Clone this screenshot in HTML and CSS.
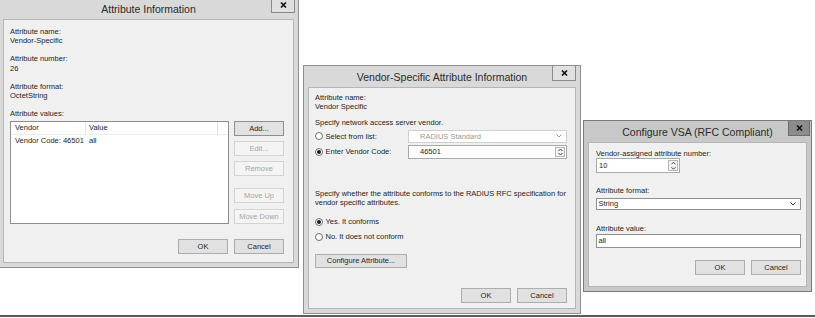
FILE: index.html
```html
<!DOCTYPE html>
<html lang="en">
<head>
    <meta charset="UTF-8">
    <title>Vendor-Specific Attribute</title>
    <link rel="stylesheet" href="styles.css">
</head>
<body>
    <div class="desktop">

        <!-- Attribute Information -->
        <div class="window attr-info">
            <div class="titlebar">
                <span class="title">Attribute Information</span>
                <span class="close-btn"><svg width="7" height="6" viewBox="0 0 7 6"><path d="M1 0.5 L6 5.5 M6 0.5 L1 5.5" stroke="#111" stroke-width="1.6"/></svg></span>
            </div>
            <div class="client">
                <div class="field">
                    <div>Attribute name:</div>
                    <div>Vendor-Specific</div>
                </div>
                <div class="field">
                    <div>Attribute number:</div>
                    <div>26</div>
                </div>
                <div class="field">
                    <div>Attribute format:</div>
                    <div>OctetString</div>
                </div>
                <div class="field-label">Attribute values:</div>
                <div class="values-row">
                    <div class="listview">
                        <div class="lv-head">
                            <span class="col-vendor">Vendor</span>
                            <span class="col-value">Value</span>
                        </div>
                        <div class="lv-row">
                            <span class="col-vendor">Vendor Code: 46501</span>
                            <span class="col-value">all</span>
                        </div>
                    </div>
                    <div class="side-buttons">
                        <button class="btn default">Add...</button>
                        <button class="btn" disabled>Edit...</button>
                        <button class="btn" disabled>Remove</button>
                        <button class="btn move-up" disabled>Move Up</button>
                        <button class="btn move-down" disabled>Move Down</button>
                    </div>
                </div>
                <div class="footer">
                    <button class="btn">OK</button>
                    <button class="btn">Cancel</button>
                </div>
            </div>
        </div>

        <!-- Vendor-Specific Attribute Information -->
        <div class="window vsa-info">
            <div class="titlebar">
                <span class="title">Vendor-Specific Attribute Information</span>
                <span class="close-btn"><svg width="7" height="6" viewBox="0 0 7 6"><path d="M1 0.5 L6 5.5 M6 0.5 L1 5.5" stroke="#111" stroke-width="1.6"/></svg></span>
            </div>
            <div class="client">
                <div class="tight">
                    <div>Attribute name:</div>
                    <div>Vendor Specific</div>
                </div>
                <div class="note vendor-note">Specify network access server vendor.</div>
                <div class="choice-row list-row">
                    <label class="radio"><span class="dot"></span>Select from list:</label>
                    <div class="combo disabled">
                        <span>RADIUS Standard</span>
                        <svg width="6" height="4" viewBox="0 0 6 4"><path d="M0.5 0.5 L3 3 L5.5 0.5" fill="none" stroke="#9a9a9a"/></svg>
                    </div>
                </div>
                <div class="choice-row code-row">
                    <label class="radio checked"><span class="dot"></span>Enter Vendor Code:</label>
                    <div class="spin wide">
                        <span>46501</span>
                        <div class="spin-arrows">
                            <svg width="5" height="3" viewBox="0 0 5 3"><path d="M0.5 2.5 L2.5 0.5 L4.5 2.5" fill="none" stroke="#444"/></svg>
                            <svg width="5" height="3" viewBox="0 0 5 3"><path d="M0.5 0.5 L2.5 2.5 L4.5 0.5" fill="none" stroke="#444"/></svg>
                        </div>
                    </div>
                </div>
                <div class="note rfc-note">Specify whether the attribute conforms to the RADIUS RFC specification for<br>vendor specific attributes.</div>
                <label class="radio checked yes-row"><span class="dot"></span>Yes. It conforms</label>
                <label class="radio no-row"><span class="dot"></span>No. It does not conform</label>
                <button class="btn configure-btn">Configure Attribute...</button>
                <div class="footer">
                    <button class="btn">OK</button>
                    <button class="btn">Cancel</button>
                </div>
            </div>
        </div>

        <!-- Configure VSA -->
        <div class="window configure active">
            <div class="titlebar">
                <span class="title">Configure VSA (RFC Compliant)</span>
                <span class="close-btn"><svg width="7" height="6" viewBox="0 0 7 6"><path d="M1 0.5 L6 5.5 M6 0.5 L1 5.5" stroke="#111" stroke-width="1.6"/></svg></span>
            </div>
            <div class="client">
                <div class="field-label">Vendor-assigned attribute number:</div>
                <div class="spin narrow">
                    <span>10</span>
                    <div class="spin-arrows">
                        <svg width="5" height="3" viewBox="0 0 5 3"><path d="M0.5 2.5 L2.5 0.5 L4.5 2.5" fill="none" stroke="#444"/></svg>
                        <svg width="5" height="3" viewBox="0 0 5 3"><path d="M0.5 0.5 L2.5 2.5 L4.5 0.5" fill="none" stroke="#444"/></svg>
                    </div>
                </div>
                <div class="field-label format-label">Attribute format:</div>
                <div class="combo format-combo">
                    <span>String</span>
                    <svg width="6" height="4" viewBox="0 0 6 4"><path d="M0.5 0.5 L3 3 L5.5 0.5" fill="none" stroke="#333"/></svg>
                </div>
                <div class="field-label value-label">Attribute value:</div>
                <div class="textbox">all</div>
                <div class="footer">
                    <button class="btn">OK</button>
                    <button class="btn">Cancel</button>
                </div>
            </div>
        </div>

        <div class="screen-edge"></div>
    </div>
</body>
</html>
```

FILE: styles.css
```css
* {
    margin: 0;
    padding: 0;
    box-sizing: border-box;
}

body {
    background: #fff;
    font-family: 'Liberation Sans', Arial, sans-serif;
    font-size: 7.5px;
    color: #1e1e1e;
    overflow: hidden;
}

.desktop {
    position: relative;
    width: 815px;
    height: 318px;
}

/* window frame */
.window {
    position: absolute;
    display: flex;
    flex-direction: column;
    background: #d9d9d9;
    border: 1px solid #8e8e8e;
    padding: 0 4px 4px;
}

.attr-info {
    left: -2px;
    top: -3px;
    width: 301px;
    height: 271px;
}

.vsa-info {
    left: 303px;
    top: 65px;
    width: 278px;
    height: 249px;
}

.configure {
    left: 583px;
    top: 120px;
    width: 229px;
    height: 172px;
}

.window.active {
    background: #c8c8c8;
    border-color: #7a7a7a;
}

.titlebar {
    position: relative;
    height: 21px;
    flex: none;
}

.title {
    display: block;
    text-align: center;
    font-size: 10.5px;
    line-height: 23px;
    color: #2a2a2a;
}

.close-btn {
    position: absolute;
    top: 0;
    right: 0;
    width: 24px;
    height: 15px;
    border: 1px solid #8a8a8a;
    border-top: none;
    background: #e0e0e0;
    display: flex;
    align-items: center;
    justify-content: center;
}

.attr-info .close-btn {
    right: -1px;
}

.active .close-btn {
    right: -3px;
    width: 22px;
    background: #8c8c8c;
    border-color: #6c6c6c;
}

.client {
    flex: 1;
    display: flex;
    flex-direction: column;
    background: #f0f0f0;
    border: 1px solid #b5b5b5;
}

.attr-info .client {
    padding: 7px 9px 8px 6px;
}

.vsa-info .client {
    padding: 6px 8px 5px 6px;
}

.configure .client {
    padding: 5.5px 5px 11px 7px;
}

/* labels */
.field {
    line-height: 9.3px;
    margin-bottom: 8.7px;
}

.field-label {
    line-height: 9.3px;
}

.tight {
    line-height: 8.5px;
}

.note {
    line-height: 9px;
}

.vendor-note {
    margin-top: 7.3px;
}

.rfc-note {
    margin-top: 30.5px;
}

/* list view */
.values-row {
    display: flex;
    gap: 5px;
    margin-top: 3px;
}

.listview {
    width: 219px;
    height: 103px;
    background: #fff;
    border: 1px solid #8e8e8e;
}

.lv-head {
    display: flex;
    height: 13px;
    line-height: 12px;
    border-bottom: 1px solid #ececec;
}

.lv-head span {
    border-right: 1px solid #e2e2e2;
}

.lv-row {
    display: flex;
    line-height: 11px;
}

.col-vendor {
    width: 75px;
    padding-left: 4px;
}

.col-value {
    width: 132px;
    padding-left: 3px;
}

.side-buttons {
    display: flex;
    flex-direction: column;
    gap: 5px;
}

.side-buttons .move-up {
    margin-top: 7px;
}

.side-buttons .move-down {
    margin-top: 1px;
}

/* buttons */
.btn {
    width: 50px;
    height: 15px;
    font-family: inherit;
    font-size: 7.5px;
    color: #1e1e1e;
    background: #e1e1e1;
    border: 1px solid #adadad;
}

.btn.default {
    border-color: #8f8f8f;
}

.btn:disabled {
    color: #a4a4a4;
    background: #f4f4f4;
    border-color: #d4d4d4;
}

.footer {
    display: flex;
    justify-content: flex-end;
    gap: 6px;
    margin-top: auto;
}

.configure-btn {
    width: 92px;
    height: 14px;
    margin-top: 11px;
}

/* radios */
.radio {
    display: flex;
    align-items: center;
    gap: 2.5px;
    line-height: 9px;
}

.dot {
    width: 8px;
    height: 8px;
    border-radius: 50%;
    border: 1px solid #6e6e6e;
    background: #fff;
    display: flex;
    align-items: center;
    justify-content: center;
}

.radio.checked .dot::after {
    content: "";
    width: 4px;
    height: 4px;
    border-radius: 50%;
    background: #1a1a1a;
}

.choice-row {
    display: flex;
    align-items: center;
}

.choice-row .radio {
    width: 93px;
}

.list-row {
    height: 13px;
    margin-top: 2.7px;
}

.code-row {
    height: 14px;
    margin-top: 2px;
}

.yes-row {
    height: 12px;
    margin-top: 8.5px;
}

.no-row {
    height: 12px;
    margin-top: 3px;
}

/* inputs */
.combo,
.spin,
.textbox {
    display: flex;
    align-items: center;
    background: #fff;
    border: 1px solid #a9a9a9;
}

.combo {
    justify-content: space-between;
}

.combo.disabled {
    width: 159px;
    height: 13px;
    padding: 0 4px 0 11px;
    color: #9a9a9a;
    border-color: #d0d0d0;
}

.format-combo {
    height: 12px;
    margin-top: 2.5px;
    padding: 0 4px 0 1.5px;
    border-color: #8f8f8f;
}

.spin {
    justify-content: space-between;
    padding-right: 1px;
}

.spin.wide {
    width: 159px;
    height: 14px;
    padding-left: 11px;
}

.spin.narrow {
    width: 84px;
    height: 15px;
    margin-top: 0.5px;
    padding-left: 2px;
}

.spin-arrows {
    display: flex;
    flex-direction: column;
    width: 10px;
    height: calc(100% - 2px);
    border: 1px solid #b8b8b8;
    background: #f2f2f2;
}

.spin-arrows svg {
    flex: 1;
    margin: auto;
}

.format-label {
    margin-top: 12.5px;
}

.value-label {
    margin-top: 14.5px;
}

.textbox {
    height: 14px;
    margin-top: 0.5px;
    padding-left: 1.5px;
    border-color: #8f8f8f;
}

.screen-edge {
    position: absolute;
    left: 0;
    top: 315px;
    width: 815px;
    height: 2px;
    background: #5c5c5c;
}
```
